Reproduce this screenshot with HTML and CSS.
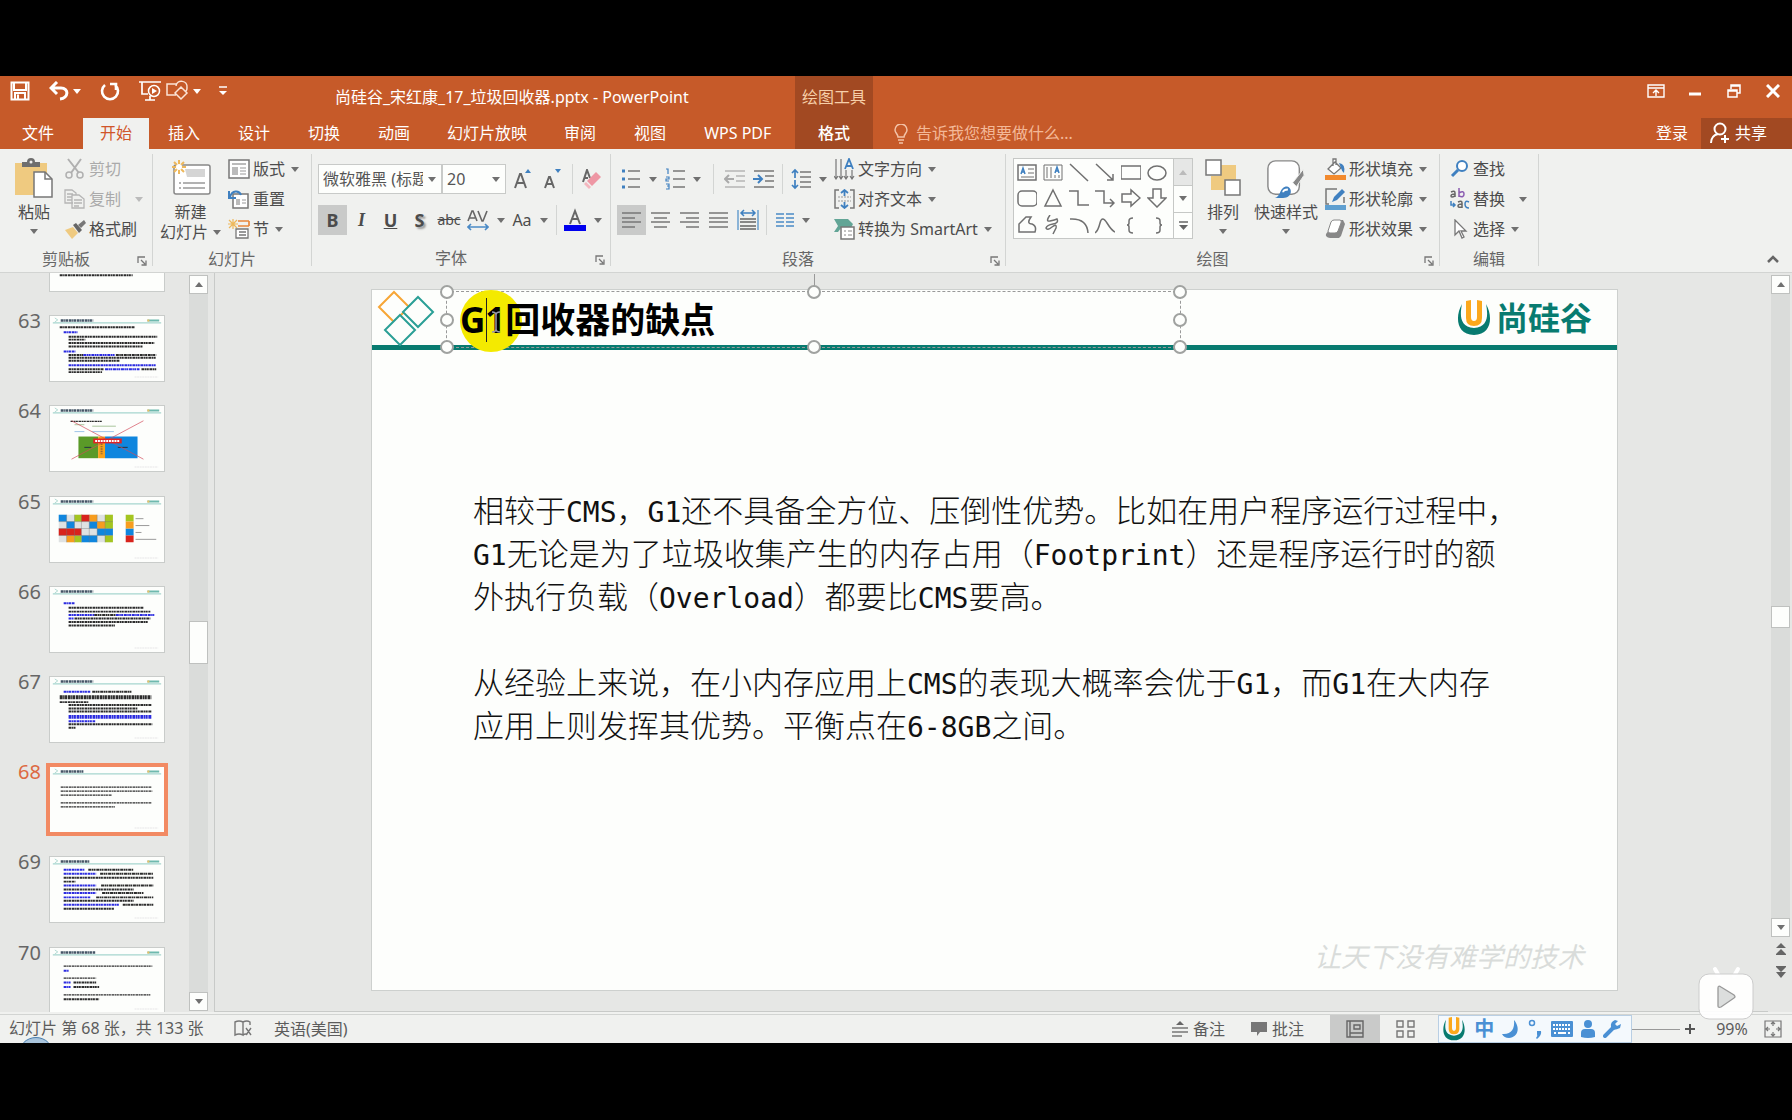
FILE: index.html
```html
<!DOCTYPE html>
<html lang="zh-CN">
<head>
<meta charset="utf-8">
<title>尚硅谷_宋红康_17_垃圾回收器.pptx - PowerPoint</title>
<link rel="stylesheet" href="styles.css">
</head>
<body>
<svg class="defs" aria-hidden="true">
  <symbol id="brand" viewBox="0 0 34 36">
    <path d="M5 4C-2 16-1 35 17 35S36 16 29 4C31 14 32 27 17 28C2 27 3 14 5 4z" fill="#087b70"/>
    <path d="M9 1l5-1v17q0 4 3 4t3-4V0l5 1v17q0 8-8 8t-8-8z" fill="#fba81c"/>
  </symbol>
  <symbol id="launch" viewBox="0 0 10 10"><path d="M1 7V1h7M4 4l4 4M9 4.500V9H4.500" fill="none" stroke="#777" stroke-width="1.300"/></symbol>
  <symbol id="thumb-head" viewBox="0 0 114 66">
    <path d="M2 7H112" stroke="#8fcac2" stroke-width="1"/>
    <path d="M4 2l3 2-3 2" fill="none" stroke="#9fd0c8" stroke-width=".8"/>
    <path d="M98 4.500h12" stroke="#6fb9ae" stroke-width="2"/><path d="M98 4.500h2" stroke="#f0c060" stroke-width="2"/>
    <path d="M85 62h24" stroke="#eee" stroke-width="1.500" stroke-dasharray="2 .6"/>
  </symbol>
</svg>

<div class="app">
  <header class="chrome">
    <div class="titlebar">
      <div class="quick">
        <button aria-label="保存"><svg width="20" height="20" viewBox="0 0 20 20"><path d="M1.500 1.500h17v17h-17zM4 2v7h12V2M5 18v-6h10v6M8 13.500v4" fill="none" stroke="#fff" stroke-width="2"/></svg></button>
        <button class="has-caret" aria-label="撤消"><svg width="20" height="20" viewBox="0 0 20 20"><path d="M8 1L2 7l6 6M2 7h10c8 0 8 10-1 11" fill="none" stroke="#fff" stroke-width="3"/></svg><i class="caret light"></i></button>
        <button aria-label="重复"><svg width="20" height="20" viewBox="0 0 20 20"><path d="M5 4A8 8 0 1 0 15 4M16 9V3h-6M16 3" fill="none" stroke="#fff" stroke-width="2.600"/></svg></button>
        <button aria-label="从头开始放映"><svg width="22" height="22" viewBox="0 0 22 22"><path d="M0 2h22M3 2v12h6M6 20h10M11 16v4" fill="none" stroke="#fff" stroke-width="1.700"/><circle cx="15" cy="11" r="5.500" fill="none" stroke="#fff" stroke-width="1.500"/><path d="M13 8l5 3-5 3z" fill="#fff"/></svg></button>
        <button class="has-caret" aria-label="形状"><svg width="23" height="22" viewBox="0 0 23 22"><path d="M10 15H1V4h10M9 13l6-6 6 6-6 6zM10 6c1-7 12-6 11 2q0 2-1 3" fill="none" stroke="#fbe3d6" stroke-width="1.500"/></svg><i class="caret light"></i></button>
        <button class="custom" aria-label="自定义快速访问工具栏"><svg width="8" height="10" viewBox="0 0 8 10"><path d="M0 1h8" stroke="#fff" stroke-width="1.500"/><path d="M0 5h8L4 9z" fill="#fff"/></svg></button>
      </div>
      <span class="doc-title">尚硅谷_宋红康_17_垃圾回收器.pptx - PowerPoint</span>
    </div>
    <div class="tool-title">绘图工具</div>
    <div class="window-controls">
      <button aria-label="功能区显示选项"><svg width="18" height="14" viewBox="0 0 18 14"><path d="M1 1h16v12H1zM1 4h16M9 12V6M6 9l3-3 3 3" fill="none" stroke="#fff" stroke-width="1.400"/></svg></button>
      <button aria-label="最小化"><svg width="14" height="14" viewBox="0 0 14 14"><path d="M1 10h12" stroke="#fff" stroke-width="3"/></svg></button>
      <button aria-label="还原"><svg width="14" height="14" viewBox="0 0 14 14"><path d="M1 6h9v7H1zM4 5V1h9v8h-3M4 2h9M1 7h9" fill="none" stroke="#fff" stroke-width="1.500"/></svg></button>
      <button aria-label="关闭"><svg width="14" height="14" viewBox="0 0 14 14"><path d="M1 1l12 12M13 1L1 13" stroke="#fff" stroke-width="3"/></svg></button>
    </div>
    <nav class="tabs">
      <button class="file">文件</button><button class="active">开始</button><button>插入</button><button>设计</button><button>切换</button><button>动画</button><button class="show">幻灯片放映</button><button>审阅</button><button>视图</button><button>WPS PDF</button>
    </nav>
    <button class="tool-tab">格式</button>
    <div class="account">
      <label class="tell"><svg width="14" height="20" viewBox="0 0 14 20"><path d="M4 13C4 10 1 9 1 6a6 6 0 0 1 12 0c0 3-3 4-3 7zM4 16h6M5 19h4" fill="none" stroke="#f3c3a8" stroke-width="1.500"/></svg><input type="text" placeholder="告诉我您想要做什么..." aria-label="告诉我您想要做什么"></label>
      <button class="login">登录</button>
      <button class="share"><svg width="20" height="22" viewBox="0 0 20 22"><circle cx="10" cy="7" r="5.500" fill="none" stroke="#fff" stroke-width="2"/><path d="M1 21c0-5 3-8 7-9M15 13v8M11 17h8" fill="none" stroke="#fff" stroke-width="2"/></svg>共享</button>
    </div>
  </header>

  <div class="ribbon">
    <section class="group clip">
      <div class="group-body">
        <button class="big paste"><svg width="38" height="40" viewBox="0 0 38 40"><path d="M0 5h32v32H0z" fill="#efca80"/><path d="M7 9V4h5q0-4 4-4t4 4h5v5z" fill="#6e6e6e"/><circle cx="16" cy="4" r="1.500" fill="#eee"/><path d="M19 14h11l7 7v18H19z" fill="#fff" stroke="#777" stroke-width="1.500"/><path d="M30 14v7h7" fill="none" stroke="#777" stroke-width="1.500"/></svg><span>粘贴</span><i class="caret"></i></button>
        <div class="list">
          <button class="off"><svg width="22" height="22" viewBox="0 0 22 22"><path d="M4 1l11 14M17 1L7 15" stroke="#b0b0b0" stroke-width="2"/><circle cx="5" cy="17" r="3" fill="none" stroke="#b0b0b0" stroke-width="1.500"/><circle cx="16" cy="17" r="3" fill="none" stroke="#b0b0b0" stroke-width="1.500"/></svg>剪切</button>
          <button class="off"><svg width="22" height="20" viewBox="0 0 22 20"><path d="M9 14H1V1h7l4 3v2M3 5h6M3 8h5M3 11h5M8 6h7l5 4v9H8zM10 11h8M10 14h8M10 17h5" fill="none" stroke="#b5b5b5" stroke-width="1.300"/></svg>复制<i class="caret far"></i></button>
          <button><svg width="22" height="20" viewBox="0 0 22 20"><path d="M1 11l8-3 5 6-6 6z" fill="#efca80"/><path d="M9 6l3-2 6 7-3 3z" fill="#666"/><path d="M14 6l6-5 2 3-5 5z" fill="#777"/></svg>格式刷</button>
        </div>
      </div>
      <footer><span>剪贴板</span><button aria-label="剪贴板设置"><svg width="10" height="10"><use href="#launch"/></svg></button></footer>
    </section>

    <section class="group slides">
      <div class="group-body">
        <button class="big"><svg width="40" height="40" viewBox="0 0 40 40"><rect x="3" y="7" width="36" height="29" rx="2" fill="#fff" stroke="#888" stroke-width="1.500"/><path d="M14 11h20v8H16z" fill="#d5d5d5"/><path d="M8 25h2M12 25h22M8 30h2M12 30h22" stroke="#999" stroke-width="1.300"/><path d="M8 2v14M1 9h14M3 4l10 10M13 4L3 14" stroke="#edb85c" stroke-width="2"/><circle cx="8" cy="9" r="3" fill="#fff"/></svg><span>新建</span><span>幻灯片<i class="caret"></i></span></button>
        <div class="list">
          <button><svg width="22" height="20" viewBox="0 0 22 20"><path d="M1 1h20v18H1z" fill="#fff" stroke="#777" stroke-width="1.500"/><path d="M4 4h14v2H4zM4 8h6v8H4z" fill="#bbb"/><path d="M12 9h6M12 12h6M12 15h6" stroke="#999"/></svg>版式<i class="caret"></i></button>
          <button><svg width="22" height="20" viewBox="0 0 22 20"><path d="M5 5h15v14H5z" fill="#fff" stroke="#777" stroke-width="1.500"/><path d="M8 10h4v6H8z" fill="#bbb"/><path d="M14 11h4M14 14h4" stroke="#999"/><path d="M1 2v7h7M2 8c2-7 9-7 11-2" fill="none" stroke="#3f80c0" stroke-width="2"/></svg>重置</button>
          <button><svg width="22" height="22" viewBox="0 0 22 22"><path d="M5 1v10M0 6h10M1 2l8 8M9 2L1 10" stroke="#edb85c" stroke-width="1.200"/><path d="M10 3h11M10 8h11M21 3v5" stroke="#e8873c" stroke-width="1.700"/><path d="M8 11h12v9H8zM11 14h7M11 17h7" fill="#fff" stroke="#777" stroke-width="1.300"/></svg>节<i class="caret"></i></button>
        </div>
      </div>
      <footer><span>幻灯片</span></footer>
    </section>

    <section class="group font">
      <div class="group-body stack">
        <div class="tools">
          <span class="combo family"><select aria-label="字体"><option>微软雅黑 (标题)</option></select><i class="caret"></i></span>
          <span class="combo size"><select aria-label="字号"><option>20</option></select><i class="caret"></i></span>
          <button class="t30" aria-label="增大字号"><svg width="18" height="22" viewBox="0 0 18 22"><path d="M1 20L6 6h1l5 14M3 15h7" fill="none" stroke="#666" stroke-width="2"/><path d="M11 5l3-4 3 4z" fill="#3f80c0"/></svg></button>
          <button class="t30" aria-label="减小字号"><svg width="18" height="22" viewBox="0 0 18 22"><path d="M1 20L5 9h1l4 11M3 16h5" fill="none" stroke="#666" stroke-width="2"/><path d="M11 1h6l-3 4z" fill="#3f80c0"/></svg></button>
          <i class="rule"></i>
          <button class="t30" aria-label="清除格式"><svg width="20" height="20" viewBox="0 0 20 20"><path d="M1 13L5 1l3 8M2 9h4" fill="none" stroke="#666" stroke-width="2"/><path d="M14 3l5 5-9 9-5-5z" fill="#ee97a4"/><path d="M4 13l5 5-2 2-5-5z" fill="#f4b6be"/></svg></button>
        </div>
        <div class="tools">
          <button class="t29 on"><b>B</b></button><button class="t29"><em>I</em></button><button class="t29"><u>U</u></button><button class="t29"><b class="shadow">S</b></button><button class="t30 small"><s>abc</s></button>
          <button class="t44" aria-label="字符间距"><svg width="22" height="22" viewBox="0 0 22 22"><path d="M1 2l4 10h1l4-10M11 12l4-10h1l4 10M13 9h6" transform="translate(21 0) scale(-1 1)" fill="none" stroke="#666" stroke-width="1.600"/><path d="M1 18h20M4 15l-3 3 3 3M18 15l3 3-3 3" fill="none" stroke="#4a8ac6" stroke-width="1.600"/></svg><i class="caret"></i></button>
          <button class="t44">Aa<i class="caret"></i></button><i class="rule"></i>
          <button class="t44" aria-label="字体颜色"><svg width="22" height="24" viewBox="0 0 22 24"><path d="M6 16l5-13 5 13M8 11h6" fill="none" stroke="#666" stroke-width="2"/><path d="M0 17h22v6H0z" fill="#00e"/></svg><i class="caret"></i></button>
        </div>
      </div>
      <footer><span>字体</span><button aria-label="字体设置"><svg width="10" height="10"><use href="#launch"/></svg></button></footer>
    </section>

    <section class="group para">
      <div class="group-body">
        <div class="stack">
          <div class="tools">
            <button class="t44" aria-label="项目符号"><svg width="20" height="22" viewBox="0 0 20 22"><path d="M7 3h12M7 11h12M7 19h12" stroke="#777" stroke-width="1.500"/><path d="M1 3h3M1 11h3M1 19h3" stroke="#3f80c0" stroke-width="3"/></svg><i class="caret"></i></button>
            <button class="t44" aria-label="编号"><svg width="20" height="22" viewBox="0 0 20 22"><path d="M8 3h12M8 11h12M8 19h12" stroke="#777" stroke-width="1.500"/><path d="M1 1h2v5M1 9h3v2H1v2h3M1 16h3v5H1M2 18h2" fill="none" stroke="#3f80c0" stroke-width="1.200"/></svg><i class="caret"></i></button>
            <i class="rule wide"></i>
            <button class="t29" aria-label="减少缩进"><svg width="22" height="20" viewBox="0 0 22 20"><path d="M1 2h20M12 7h9M12 12h9M1 18h20" stroke="#b5b5b5" stroke-width="1.500"/><path d="M10 10H1M5 6l-4 4 4 4" fill="none" stroke="#aaa" stroke-width="2"/></svg></button>
            <button class="t29" aria-label="增加缩进"><svg width="22" height="20" viewBox="0 0 22 20"><path d="M1 2h20M12 7h9M12 12h9M1 18h20" stroke="#777" stroke-width="1.500"/><path d="M0 10h9M5 6l4 4-4 4" fill="none" stroke="#3f80c0" stroke-width="2"/></svg></button>
            <i class="rule"></i>
            <button class="t44" aria-label="行距"><svg width="20" height="22" viewBox="0 0 20 22"><path d="M9 4h11M9 9h11M9 14h11M9 19h11" stroke="#777" stroke-width="1.500"/><path d="M4 10V2M1 5l3-3 3 3M4 12v8M1 17l3 3 3-3" fill="none" stroke="#3f80c0" stroke-width="1.700"/></svg><i class="caret"></i></button>
          </div>
          <div class="tools">
            <button class="t29 on" aria-label="左对齐"><svg width="19" height="16" viewBox="0 0 19 16"><path d="M0 1h19M0 6h13M0 10h19M0 15h13" stroke="#777" stroke-width="1.500"/></svg></button>
            <button class="t29" aria-label="居中"><svg width="19" height="16" viewBox="0 0 19 16"><path d="M0 1h19M3 6h13M0 10h19M3 15h13" stroke="#777" stroke-width="1.500"/></svg></button>
            <button class="t29" aria-label="右对齐"><svg width="19" height="16" viewBox="0 0 19 16"><path d="M0 1h19M6 6h13M0 10h19M6 15h13" stroke="#777" stroke-width="1.500"/></svg></button>
            <button class="t29" aria-label="两端对齐"><svg width="19" height="16" viewBox="0 0 19 16"><path d="M0 1h19M0 6h19M0 10h19M0 15h19" stroke="#777" stroke-width="1.500"/></svg></button>
            <button class="t29" aria-label="分散对齐"><svg width="22" height="22" viewBox="0 0 22 22"><path d="M1 1v20M21 1v20" stroke="#6aa0d0" stroke-width="1.500"/><path d="M4 4h14M7 1L4 4l3 3M15 1l3 3-3 3" fill="none" stroke="#3f80c0" stroke-width="1.500"/><path d="M3 10h16M3 13h16M3 17h16M3 20h16" stroke="#666" stroke-width="1.500"/></svg></button>
            <i class="rule"></i>
            <button class="t44" aria-label="分栏"><svg width="18" height="16" viewBox="0 0 18 16"><path d="M0 2h8M10 2h8M0 6h8M10 6h8M0 10h8M10 10h8M0 14h8M10 14h8" stroke="#4a8ac6" stroke-width="1.700"/></svg><i class="caret"></i></button>
          </div>
        </div>
        <div class="list">
          <button><svg width="21" height="22" viewBox="0 0 21 22"><path d="M2 1v19M7 1v19M12 12v8M18 12v8M0 18l2 3 2-3M5 18l2 3 2-3M10 18l2 3 2-3M16 18l2 3 2-3" fill="none" stroke="#777" stroke-width="1.200"/><path d="M11 11l4-10 4 10M12 8h6" fill="none" stroke="#3f80c0" stroke-width="1.800"/></svg>文字方向<i class="caret"></i></button>
          <button><svg width="21" height="20" viewBox="0 0 21 20"><path d="M5 1H1v18h4M16 1h4v18h-4" fill="none" stroke="#777" stroke-width="1.500"/><path d="M4 8h13M4 12h13" stroke="#999" stroke-dasharray="2 1"/><path d="M10.500 7V1M7 4l3.500-3L14 4M10.500 13v6M7 16l3.500 3 3.500-3" fill="none" stroke="#3f80c0" stroke-width="1.800"/></svg>对齐文本<i class="caret"></i></button>
          <button><svg width="21" height="22" viewBox="0 0 21 22"><path d="M0 1h14l5 5-2 4H7L4 14H0l4-6z" fill="#62a596"/><path d="M7 9h13v12H7z" fill="#fff" stroke="#777" stroke-width="1.500"/><path d="M10 13h2M14 13h4M10 17h2M14 17h4" stroke="#888"/></svg>转换为 SmartArt<i class="caret"></i></button>
        </div>
      </div>
      <footer><span>段落</span><button aria-label="段落设置"><svg width="10" height="10"><use href="#launch"/></svg></button></footer>
    </section>

    <section class="group draw">
      <div class="group-body">
        <div class="gallery">
          <div class="shapes">
            <button aria-label="文本框"><svg viewBox="0 0 20 20"><path d="M1 3h18v15H1z"/><path d="M4 12l2-6 2 6M5 10h3" stroke="#3f80c0"/><path d="M11 7h6M11 11h6M4 15h13" stroke-width="1"/></svg></button>
            <button aria-label="竖排文本框"><svg viewBox="0 0 20 20"><path d="M1 3h18v15H1zM4 5v11M8 5v11M12 13v3M16 13v3" stroke-width="1"/><path d="M12 11l2-6 2 6M12 9h4" stroke="#3f80c0"/></svg></button>
            <button aria-label="直线"><svg viewBox="0 0 20 20"><path d="M1 2l18 17"/></svg></button>
            <button aria-label="箭头"><svg viewBox="0 0 20 20"><path d="M1 2l17 16M18 12v6h-6"/></svg></button>
            <button aria-label="矩形"><svg viewBox="0 0 20 20"><path d="M0 4h20v13H0z"/></svg></button>
            <button aria-label="椭圆"><svg viewBox="0 0 20 20"><ellipse cx="10" cy="11" rx="9" ry="7"/></svg></button>
            <button aria-label="圆角矩形"><svg viewBox="0 0 20 20"><rect x="1" y="3" width="19" height="15" rx="4"/></svg></button>
            <button aria-label="三角形"><svg viewBox="0 0 20 20"><path d="M10 2l8 16H2z"/></svg></button>
            <button aria-label="肘形连接符"><svg viewBox="0 0 20 20"><path d="M0 3h9v14h11"/></svg></button>
            <button aria-label="肘形箭头"><svg viewBox="0 0 20 20"><path d="M0 3h9v12h10M15 11l4 4-4 4"/></svg></button>
            <button aria-label="右箭头"><svg viewBox="0 0 20 20"><path d="M1 6h9V2l9 8-9 8v-4H1z"/></svg></button>
            <button aria-label="下箭头"><svg viewBox="0 0 20 20"><path d="M6 1v9H1l9 9 9-9h-5V1z"/></svg></button>
            <button aria-label="任意多边形"><svg viewBox="0 0 20 20"><path d="M2 17V9l7-7h5q-5 7 1 7 5 2 3 8z"/></svg></button>
            <button aria-label="曲线"><svg viewBox="0 0 20 20"><path d="M7 0q-5 7 0 6t7-2q2 4-4 5t-7 4q1 3 6-1t4 1q-3 6-3 6"/></svg></button>
            <button aria-label="弧形"><svg viewBox="0 0 20 20"><path d="M1 4q17-1 18 14"/></svg></button>
            <button aria-label="自由曲线"><svg viewBox="0 0 20 20"><path d="M0 18Q3 16 5 8t7 0 8 9"/></svg></button>
            <button aria-label="左大括号"><svg viewBox="0 0 20 20"><path d="M12 3q-4 0-4 3v2q0 2-2 2 2 0 2 2v3q0 3 4 3"/></svg></button>
            <button aria-label="右大括号"><svg viewBox="0 0 20 20"><path d="M9 3q4 0 4 3v2q0 2 2 2-2 0-2 2v3q0 3-4 3"/></svg></button>
          </div>
          <div class="gallery-nav"><button class="dim" aria-label="上一行"><i class="caret up"></i></button><button aria-label="下一行"><i class="caret"></i></button><button aria-label="其他"><svg width="9" height="9" viewBox="0 0 9 9"><path d="M0 1h9" stroke="#666" stroke-width="1.500"/><path d="M0 4h9L4.500 9z" fill="#666"/></svg></button></div>
        </div>
        <button class="big arrange"><svg width="36" height="40" viewBox="0 0 36 40"><path d="M15 7h16v16H15zM6 18h14v14H6z" fill="#efca80"/><path d="M1 2h15v15H1zM20 22h15v15H20z" fill="#fff" stroke="#777" stroke-width="1.500"/></svg><span>排列</span><i class="caret"></i></button>
        <button class="big quickstyle"><svg width="40" height="42" viewBox="0 0 40 42"><rect x="1" y="3" width="33" height="35" rx="8" fill="#fff" stroke="#888" stroke-width="1.500"/><path d="M38 12l-11 14 4 4 8-12z" fill="#888" stroke="#f0f1ef"/><path d="M8 42c7-1 5-12 13-12 6 1 6 12-4 12z" fill="#3f80c0"/><path d="M17 36q0-3 5-3" stroke="#fff" fill="none" stroke-width="2"/></svg><span>快速样式</span><i class="caret"></i></button>
        <div class="list">
          <button><svg width="21" height="22" viewBox="0 0 21 22"><path d="M3 11l7-7 6 6-7 6zM8 8V1h3v6" fill="#fff" stroke="#777" stroke-width="1.300"/><path d="M14 5q7 1 5 10-2-1-3-5z" fill="#3f80c0"/><path d="M0 17h21v5H0z" fill="#f28a2e"/></svg>形状填充<i class="caret"></i></button>
          <button><svg width="21" height="22" viewBox="0 0 21 22"><path d="M12 1H1v15h3M19 9v6" fill="none" stroke="#777" stroke-width="1.500"/><path d="M7 14l2-5 8-8 3 3-8 8z" fill="#3f80c0"/><path d="M0 17h21v5H0z" fill="#5f9fd0"/></svg>形状轮廓<i class="caret"></i></button>
          <button><svg width="21" height="20" viewBox="0 0 21 20"><path d="M4 11L7 2q1-1 3-1h8l2 4-4 12-2 2H5q-5-1-4-4z" fill="#888"/><path d="M3 12l3-9q1-2 3-2h6q2 0 1 3l-3 8q-1 2-3 2H5q-2 0-2-2z" fill="#fff" stroke="#888"/></svg>形状效果<i class="caret"></i></button>
        </div>
      </div>
      <footer><span>绘图</span><button aria-label="绘图设置"><svg width="10" height="10"><use href="#launch"/></svg></button></footer>
    </section>

    <section class="group edit">
      <div class="group-body">
        <div class="list">
          <button><svg width="20" height="18" viewBox="0 0 20 18"><circle cx="12" cy="6" r="5" fill="#fff" stroke="#3f80c0" stroke-width="2"/><path d="M8 10l-6 6" stroke="#3f80c0" stroke-width="3"/></svg>查找</button>
          <button><svg width="20" height="22" viewBox="0 0 20 22"><g fill="none" stroke-width="1.500"><path d="M1 4q4-2 4 1v4M5 6Q1 6 1 8t4 0" stroke="#666"/><path d="M9 0v9M9 5q5-3 5 1t-5 2" stroke="#8a5bb0"/><path d="M8 14q4-2 4 1v5M12 16q-4 0-4 2t4 1" stroke="#666"/><path d="M19 14q-4-2-4 2t4 4M1 13v4h4M3 15l2 2-2 2" stroke="#3f80c0"/></g></svg>替换<i class="caret far"></i></button>
          <button><svg width="20" height="20" viewBox="0 0 20 20"><path d="M5 1v15l4-4 3 7 2-1-3-6h5z" fill="#fff" stroke="#777" stroke-width="1.300"/></svg>选择<i class="caret"></i></button>
        </div>
      </div>
      <footer><span>编辑</span></footer>
    </section>
    <button class="collapse" aria-label="折叠功能区"><svg width="12" height="8" viewBox="0 0 12 8"><path d="M1 7l5-5 5 5" fill="none" stroke="#666" stroke-width="2.500"/></svg></button>
  </div>

  <main class="workspace">
    <aside class="panel">
      <ol class="thumbs">
        <li><span></span><button aria-label="幻灯片 62"><svg viewBox="0 0 114 66"><path class="ln" d="M9 50H83"/></svg></button></li>
        <li><span>63</span><button aria-label="幻灯片 63"><svg viewBox="0 0 114 66"><use href="#thumb-head"/><path class="ln hd" d="M10 4.500H43"/><path class="ln" d="M9 11.500H85M18 21H108M18 24H35M18 27.500H105M18 31H93M18 39.500H33M66 39.500H107M18 42.500H107M18 45.500H70M18 54H54M92 54H107M18 57H52"/><path class="ln bl" d="M13 16.500H27M13 36H25M33 39.500H65M18 50H107M55 54H90"/></svg></button></li>
        <li><span>64</span><button aria-label="幻灯片 64"><svg viewBox="0 0 114 66"><use href="#thumb-head"/><path class="ln hd" d="M10 4.500H43"/><path class="ln thin" d="M20 15.500H52"/><path d="M24 19H34M42 20.500H66" stroke="#a9c49a"/><path d="M24 26H34M42 26H64" stroke="#9cc4e8"/><path d="M28 31h20v22H28z" fill="#5a9a28"/><path d="M48 31h7v22h-7z" fill="#f7a11a"/><path d="M55 31h33v22H55z" fill="#0f86de"/><path d="M34 42h7M68 42h10" stroke="#234" /><path d="M51.500 38v11" stroke="#963" stroke-width="2" stroke-dasharray="1.500 1"/><path d="M21 15L94 54M94 15L21 54" stroke="#d24a5a" stroke-width=".7"/><path d="M43 33h29v5H43z" fill="#e02424"/><path d="M45 35.500h25" stroke="#fff" stroke-width="2" stroke-dasharray="2 .8"/></svg></button></li>
        <li><span>65</span><button aria-label="幻灯片 65"><svg viewBox="0 0 114 66"><use href="#thumb-head"/><path class="ln hd" d="M10 4.500H43"/><path d="M8 18h55v28H8z" fill="#dfe2e2"/><path d="M8 18h8v7H8zM16 25h8v7h-8zM39 25h8v7h-8zM47 32h16v7H47zM31 39h16v7H31zM76 32h8v7h-8z" fill="#0f86de"/><path d="M24 18h8v7h-8zM55 18h8v14h-8zM24 39h7v7h-7zM55 39h8v7h-8zM76 18h8v7h-8z" fill="#a4c520"/><path d="M39 18h8v7h-8zM47 25h8v7h-8zM16 39h8v7h-8zM76 25h8v7h-8z" fill="#f79d1e"/><path d="M31 18h8v7h-8zM8 32h23v7H8zM76 39h8v7h-8z" fill="#d8231c"/><path d="M8 25H63M8 32H63M8 39H63M16 18V46M24 18V46M31 18V46M39 18V46M47 18V46M55 18V46" stroke="#777" stroke-width=".4"/><path d="M86 22H94M86 29H100M86 36H92M86 43H107" stroke="#999"/></svg></button></li>
        <li><span>66</span><button aria-label="幻灯片 66"><svg viewBox="0 0 114 66"><use href="#thumb-head"/><path class="ln hd" d="M10 4.500H43"/><path class="ln" d="M18 21H94M18 25H101M44 28.500H66M24 32H101M18 35.500H99M18 39H65"/><path class="ln bl" d="M13 16.500H24M18 28.500H44M66 28.500H105M18 32H23"/></svg></button></li>
        <li><span>67</span><button aria-label="幻灯片 67"><svg viewBox="0 0 114 66"><use href="#thumb-head"/><path class="ln hd" d="M10 4.500H43"/><path class="ln" d="M42 15H82M9 25.500H38M18 28.500H102M18 32H88M18 35H102M18 48H103M18 51.500H25"/><path class="ln fat" d="M9 20.500H102"/><path class="ln bl" d="M13 15H40M18 45H45"/><path class="ln bl fat" d="M18 40.500H102"/></svg></button></li>
        <li class="current"><span>68</span><button aria-label="幻灯片 68"><svg viewBox="0 0 114 66"><use href="#thumb-head"/><path class="ln hd" d="M10 4.500H33"/><path class="ln thin" d="M10 20.500H102M10 24.500H103M10 28.500H62M10 36.500H102M10 40.500H65"/></svg></button></li>
        <li><span>69</span><button aria-label="幻灯片 69"><svg viewBox="0 0 114 66"><use href="#thumb-head"/><path class="ln hd" d="M10 4.500H39"/><path class="ln" d="M38 13H84M50 17H104M13 21H104M13 25H25M51 29H104M13 33H84M52 36.500H94M46 41H104M13 44.500H84M73 48.500H104M13 52.500H64"/><path class="ln bl" d="M13 13H34M13 17H46M13 29H46M13 36.500H46M13 41H40M13 48.500H69"/></svg></button></li>
        <li><span>70</span><button aria-label="幻灯片 70"><svg viewBox="0 0 114 66"><use href="#thumb-head"/><path class="ln hd" d="M10 4.500H45"/><path class="ln" d="M23 35H46M23 39.500H49M13 52H49"/><path class="ln thin" d="M13 18.500H103M13 30.500H46M13 47.500H101"/><path class="ln bl" d="M13 23H18M13 35H20M13 39.500H20"/></svg></button></li>
      </ol>
      <div class="vbar"><button aria-label="向上滚动"><i class="caret up"></i></button><span class="knob left-knob"></span><button aria-label="向下滚动"><i class="caret"></i></button></div>
    </aside>

    <section class="canvas">
      <article class="slide">
        <header class="slide-head">
          <svg class="diamonds" width="58" height="56" viewBox="0 0 58 56"><path d="M17 2l15 15-15 15L2 17z" fill="none" stroke="#f7a636" stroke-width="2"/><path d="M41 7l15 15-15 15-15-15zM23 25l15 15-15 15L8 40z" fill="#fdfefc" stroke="#2a9f96" stroke-width="2"/></svg>
          <div class="title-box">
            <i class="glow"></i>
            <h1>G1回收器的缺点</h1>
            <svg class="ibeam" width="12" height="22" viewBox="0 0 12 22"><path d="M2 1q4 0 4 3 0-3 4-3M6 4v14M2 21q4 0 4-3 0 3 4 3" fill="none" stroke="#99a" stroke-width="1.500"/></svg>
            <i class="text-caret"></i><i class="stem"></i>
            <i class="h nw"></i><i class="h w"></i><i class="h sw"></i><i class="h n"></i><i class="h s"></i><i class="h ne"></i><i class="h e"></i><i class="h se"></i>
          </div>
          <div class="logo"><svg width="34" height="36"><use href="#brand"/></svg><span>尚硅谷</span></div>
        </header>
        <div class="slide-text">
          <p>相较于<span>CMS</span>，<span>G1</span>还不具备全方位、压倒性优势。比如在用户程序运行过程中，<br><span>G1</span>无论是为了垃圾收集产生的内存占用（<span>Footprint</span>）还是程序运行时的额<br>外执行负载（<span>Overload</span>）都要比<span>CMS</span>要高。</p>
          <p>从经验上来说，在小内存应用上<span>CMS</span>的表现大概率会优于<span>G1</span>，而<span>G1</span>在大内存<br>应用上则发挥其优势。平衡点在<span>6-8GB</span>之间。</p>
        </div>
        <footer class="motto">让天下没有难学的技术</footer>
      </article>
    </section>
    <div class="rail">
      <div class="vbar"><button aria-label="向上滚动"><i class="caret up"></i></button><span class="knob right-knob"></span><button aria-label="向下滚动"><i class="caret"></i></button></div>
      <button aria-label="上一张幻灯片"><svg width="10" height="12" viewBox="0 0 10 12"><path d="M5 0l5 5H0zM5 6l5 5H0zM0 11h10v1H0z" fill="#666"/></svg></button>
      <button aria-label="下一张幻灯片"><svg width="10" height="12" viewBox="0 0 10 12"><path d="M0 0h10v1L5 6 0 1zM0 6h10l-5 6z" fill="#666"/></svg></button>
    </div>
    <div class="tv"><svg width="56" height="54" viewBox="0 0 56 54"><path d="M17 3l4 7M40 3l-4 7" stroke="#fff" stroke-width="4" stroke-linecap="round"/><rect x="1" y="8" width="54" height="45" rx="10" fill="#fff" fill-opacity=".93" stroke="#ccc"/><path d="M20 22q0-3 3-1l13 8q2 2 0 3l-13 9q-3 1-3-1z" fill="#dcdedd" stroke="#999" stroke-width="1.300"/></svg></div>
  </main>

  <footer class="status">
    <span class="count">幻灯片 第 68 张，共 133 张</span>
    <button class="spell" aria-label="拼写检查"><svg width="20" height="18" viewBox="0 0 20 18"><path d="M10 15q-4-2-8 0V2q4-2 8 0zV2q4-2 7 0v3M10 15q3-2 4 0M13 8l5 7M18 8l-5 7" fill="none" stroke="#777" stroke-width="1.400"/></svg></button>
    <button>英语(美国)</button>
    <div class="status-right">
      <button class="note"><svg width="16" height="18" viewBox="0 0 16 18"><path d="M0 8h16M0 12h16M0 16h10" stroke="#777" stroke-width="1.500"/><path d="M4 5l4-4 4 4z" fill="#666"/></svg>备注</button>
      <button class="note"><svg width="16" height="16" viewBox="0 0 16 16"><path d="M0 1h16v10H9l-3 4v-4H0z" fill="#777"/></svg>批注</button>
      <button class="view on" aria-label="普通视图"><svg width="18" height="18" viewBox="0 0 18 18"><path d="M1 1h16v16H1zM4 1v16M4 13h13M8 5h6v4H8z" fill="none" stroke="#666" stroke-width="1.400"/></svg></button>
      <button class="view" aria-label="幻灯片浏览"><svg width="19" height="18" viewBox="0 0 19 18"><path d="M1 1h6v6H1zM12 1h6v6h-6zM1 11h6v6H1zM12 11h6v6h-6z" fill="none" stroke="#777" stroke-width="1.400"/></svg></button>
      <div class="ime">
        <svg width="24" height="24"><use href="#brand"/></svg><b>中</b>
        <svg width="18" height="20" viewBox="0 0 18 20"><path d="M12 1c6 7 5 17-5 18q-5 0-7-4c9 1 13-5 12-14z" fill="#4a90d4"/></svg>
        <svg width="14" height="20" viewBox="0 0 14 20"><circle cx="4" cy="4" r="2.500" fill="none" stroke="#4a90d4" stroke-width="1.500"/><path d="M9 12h4q1 4-4 8l-1-1q2-2 1-4z" fill="#4a90d4"/></svg>
        <svg width="22" height="16" viewBox="0 0 22 16"><rect width="22" height="16" rx="1" fill="#4a90d4"/><path d="M2 4h18M2 8h18" stroke="#fff" stroke-width="2" stroke-dasharray="2 1"/><path d="M3 12h2M7 12h8M17 12h2" stroke="#fff" stroke-width="2"/></svg>
        <svg width="14" height="18" viewBox="0 0 14 18"><circle cx="7" cy="4" r="4" fill="#4a90d4"/><path d="M0 17V13q0-4 4-4h6q4 0 4 4v4q-7 2-14 0z" fill="#4a90d4"/></svg>
        <svg width="18" height="18" viewBox="0 0 18 18"><path d="M2 16L11 7" stroke="#4a90d4" stroke-width="4" stroke-linecap="round"/><path d="M12 0q-5 2-4 7t9 1l1-4-4 2-2-2 3-3z" fill="#4a90d4"/></svg>
      </div>
      <input class="zoom" type="range" min="10" max="400" value="99" aria-label="缩放">
      <button class="plus" aria-label="放大"><svg width="12" height="12" viewBox="0 0 12 12"><path d="M6 1v10M1 6h10" stroke="#555" stroke-width="2"/></svg></button>
      <button class="percent">99%</button>
      <button aria-label="使幻灯片适应当前窗口"><svg width="18" height="18" viewBox="0 0 18 18"><path d="M1 1h16v16H1zM9 3v3M9 12v3M3 9h3M12 9h3M7 4l2-2 2 2M7 14l2 2 2-2M4 7L2 9l2 2M14 7l2 2-2 2" fill="none" stroke="#777" stroke-width="1.200"/></svg></button>
    </div>
    <i class="orb"></i>
  </footer>
</div>
</body>
</html>
```
FILE: styles.css
```css
* { box-sizing: border-box; }

body {
  margin: 0;
  padding: 76px 0 77px;
  height: 100vh;
  background: #000;
  color: #4c4c4c;
  font: 16px/20px "Noto Sans", "Noto Sans CJK SC", sans-serif;
}

button, input, select { font: inherit; color: inherit; }

button {
  display: flex;
  align-items: center;
  justify-content: center;
  padding: 0;
  border: 0;
  background: none;
  white-space: nowrap;
}

svg { flex: none; display: block; }
.defs { position: absolute; width: 0; height: 0; }

.app {
  display: flex;
  flex-direction: column;
  height: 100%;
  overflow: hidden;
  background: #f0f1ef;
}

.caret {
  flex: none;
  width: 0;
  height: 0;
  border: 4px solid transparent;
  border-top: 5px solid #707070;
  border-bottom: 0;
}
.caret.up { border-top: 0; border-bottom: 5px solid #707070; }
.caret.light { border-top-color: #fff; }

/* Title bar and tabs */
.chrome {
  flex: none;
  display: grid;
  grid-template-columns: 795px 78px 1fr;
  grid-template-rows: 42px 31px;
  background: #c65a29;
  color: #fff;
}
.titlebar { display: flex; }
.quick { display: flex; align-items: center; height: 30px; width: 335px; padding-left: 10px; gap: 19px; }
.quick button { gap: 4px; }
.quick button:nth-child(5) { margin-left: -14px; }
.quick .custom { margin-left: -1px; }
.doc-title { padding-top: 11px; white-space: nowrap; }
.tool-title { padding-top: 11px; text-align: center; background: #a24922; color: #f6cfa9; white-space: nowrap; }
.window-controls { display: flex; justify-content: flex-end; height: 30px; }
.window-controls button { width: 39px; }
.tabs { display: flex; }
.tabs button { padding: 0 19px 2px; }
.tabs .file { width: 83px; padding-right: 26px; }
.tabs .active { background: #f0f1ef; color: #d0552a; padding: 0 17px 2px; }
.tabs .show { padding: 0 18px 2px; }
.tool-tab { background: #a24922; font-weight: 500; padding-bottom: 2px; }
.account { display: flex; justify-content: flex-end; }
.tell { display: flex; align-items: center; gap: 8px; margin-right: auto; padding-left: 21px; }
.tell input { width: 220px; padding: 0 0 2px; border: 0; background: none; }
.tell input::placeholder { color: #f3b898; opacity: 1; }
.login { margin-right: 13px; padding-bottom: 2px; }
.share { width: 91px; gap: 5px; background: #a24922; justify-content: flex-start; padding: 0 0 2px 9px; }

/* Ribbon */
.ribbon { flex: none; display: flex; height: 124px; padding: 5px 0 6px; border-bottom: 1px solid #d2d4d2; }
.group { flex: none; display: flex; flex-direction: column; border-right: 1px solid #d3d5d3; }
.group-body { display: flex; height: 90px; }
.group > footer { display: flex; align-items: center; height: 16px; margin-top: 7px; color: #666; }
.group > footer span { flex: 1; text-align: center; }
.group > footer button { width: 20px; height: 20px; padding-top: 4px; }
.clip { width: 153px; }
.slides { width: 159px; }
.font { width: 299px; }
.para { width: 395px; }
.draw { width: 434px; }
.edit { width: 99px; }

.list { display: flex; flex-direction: column; }
.list button { height: 30px; gap: 3px; justify-content: flex-start; }
.list .caret { margin-left: 3px; }
.list .caret.far { margin-left: 11px; }
.off { color: #aaa; }
.off .caret { border-top-color: #bbb; }

.big { flex-direction: column; justify-content: flex-start; padding-top: 4px; }
.big svg { margin-bottom: 4px; height: 40px; }
.big span { display: flex; align-items: center; gap: 5px; }
.big > .caret { margin-top: 7px; }
.paste { width: 64px; padding-left: 4px; }
.slides .big { width: 75px; }
.arrange { width: 54px; padding-left: 6px; }
.quickstyle { width: 78px; }

.stack { display: flex; flex-direction: column; gap: 11px; padding: 10px 0 0 6px; }
.tools { display: flex; height: 30px; align-items: center; }
.tools button { flex: none; height: 30px; gap: 8px; }
.t29 { width: 29px; }
.t30 { width: 30px; }
.t44 { width: 44px; }
.tools .on, .status .on { background: #c9cac9; }
.tools b, .tools em, .tools u { font-size: 18px; font-weight: 700; }
.tools em { font-family: "Liberation Serif", serif; }
.tools .shadow { text-shadow: 2px 2px 2px #999; }
.tools .small { font-size: 14px; }
.rule { flex: none; width: 1px; height: 30px; background: #d3d5d3; margin: 0 4px; }
.rule.wide { margin: 0 6px 0 8px; }
.combo { flex: none; position: relative; height: 30px; }
.combo select { appearance: none; width: 100%; height: 100%; padding: 0 18px 0 4px; border: 1px solid #c8cac8; border-radius: 0; background: #fdfefc; color: #555; }
.combo .caret { position: absolute; right: 6px; top: 13px; }
.family { width: 124px; }
.size { width: 64px; margin-right: 2px; }
.para .stack { width: 223px; }

.gallery { flex: none; display: flex; margin: 4px 0 5px 7px; border: 1px solid #c6c8c6; background: #fdfefc; width: 180px; }
.shapes { display: grid; grid-template-columns: repeat(6, 26px); padding: 0 2px 0 0; flex: 1; }
.shapes svg { width: 20px; height: 20px; fill: none; stroke: #707070; stroke-width: 1.5px; }
.gallery-nav { display: grid; grid-template-rows: 1fr 1fr 1fr; width: 19px; border-left: 1px solid #c6c8c6; }
.gallery-nav button + button { border-top: 1px solid #c6c8c6; }
.gallery-nav .dim { background: #e6e7e6; }
.dim .caret { border-bottom-color: #bbb; }
.edit .list { padding-left: 10px; }
.collapse { margin-left: auto; width: 38px; align-self: flex-end; height: 14px; }

/* Workspace */
.workspace { position: relative; flex: 1; min-height: 0; display: flex; background: #e6e7e5; }
.panel { flex: none; display: flex; width: 215px; padding-bottom: 1px; border-right: 1px solid #c8cac8; overflow: hidden; }
.thumbs { flex: 1; display: grid; grid-auto-rows: 1fr; height: 110%; margin: -48px 0 0; padding: 0 0 0 18px; list-style: none; }
.thumbs li { display: flex; gap: 8px; min-height: 0; }
.thumbs span { width: 23px; font-size: 20px; line-height: 12px; color: #666; }
.thumbs button { width: 116px; height: 67px; border: 1px solid #c9ccca; background: #fdfefc; }
.thumbs svg { width: 114px; height: 65px; }
.thumbs .current span { color: #dd6a43; }
.thumbs .current button { outline: 3px solid #f28a63; border-color: #f28a63; }
.ln { fill: none; stroke: #2c2c2c; stroke-width: 2; stroke-dasharray: 3 .5 1.5 .4 2 .7; }
.ln.hd { stroke: #456; stroke-width: 2.6; }
.ln.bl { stroke: #2b2be0; }
.ln.thin { stroke-width: 1.3; }
.ln.fat { stroke-width: 4; }

.vbar { flex: none; display: flex; flex-direction: column; justify-content: space-between; width: 19px; background: #dadcda; position: relative; }
.vbar button, .knob { width: 19px; height: 19px; border: 1px solid #bfc1bf; background: #fdfefc; }
.panel .vbar { margin: 2px 6px 0 0; }
.knob { position: absolute; left: 0; }
.left-knob { top: 47%; height: 43px; }
.right-knob { top: 50%; height: 22px; }

.canvas { flex: 1; padding: 16px 150px 20px 156px; border-bottom: 1px solid #c8cac8; display: flex; }
.slide { flex: 1; display: flex; flex-direction: column; background: #fdfefc; border: 1px solid #cdd0ce; }
.slide-head { display: flex; height: 60px; border-bottom: 5px solid #087b70; }
.diamonds { margin-left: 5px; }
.title-box { position: relative; flex: 1; height: 57px; margin: 1px 0 0 11px; max-width: 735px; border: 1px dashed #999; }
h1 { position: relative; margin: 0; padding-left: 13px; font-size: 35px; line-height: 56px; font-weight: 700; color: #000; white-space: nowrap; }
.glow { position: absolute; left: 13px; top: -2px; width: 62px; height: 62px; border-radius: 50%; background: #f4ea00; }
.ibeam { position: absolute; left: 43px; top: 19px; }
.text-caret { position: absolute; left: 39px; top: 6px; width: 1px; height: 44px; background: #222; }
.stem { position: absolute; left: 50%; top: -18px; width: 1px; height: 13px; background: #999; }
.h { position: absolute; width: 14px; height: 14px; margin: -7px; border: 2px solid #a0a2a0; border-radius: 50%; background: #fdfefc; }
.nw, .w, .sw { left: 0; }
.n, .s { left: 50%; }
.ne, .e, .se { left: 100%; }
.nw, .n, .ne { top: 0; }
.w, .e { top: 50%; }
.sw, .s, .se { top: 100%; }
.logo { display: flex; align-items: center; gap: 5px; margin: 0 25px 0 auto; color: #087b70; font-size: 32px; font-weight: 700; white-space: nowrap; }
.slide-text { padding: 137px 90px 0 101px; color: #111; font: 300 31px/43px "Noto Sans CJK SC", sans-serif; white-space: nowrap; }
.slide-text p { margin: 0 0 43px; }
.slide-text span { font: 400 28px/28px "DejaVu Sans Mono", monospace; }
.motto { margin: auto 33px 16px auto; font-size: 27px; line-height: 34px; font-style: italic; color: #d9dcda; }

.rail { flex: none; width: 24px; padding: 2px 2px 34px 3px; display: flex; flex-direction: column; align-items: center; }
.rail .vbar { flex: 1; margin-bottom: -5px; }
.rail > button { height: 12px; width: 19px; margin-top: 11px; }
.tv { position: absolute; right: 38px; bottom: -8px; z-index: 1; }

/* Status bar */
.status { flex: none; position: relative; display: flex; align-items: stretch; height: 29px; margin-top: 2px; border-top: 1px solid #d2d4d2; color: #5c5c5c; overflow: hidden; white-space: nowrap; }
.count { width: 224px; padding: 3px 0 0 9px; }
.spell { width: 50px; padding-right: 12px; }
.status-right { display: flex; margin-left: auto; padding-right: 10px; }
.note { width: 79px; gap: 5px; justify-content: flex-start; }
.view { width: 50px; }
.ime { display: flex; align-items: center; justify-content: space-between; width: 194px; margin-left: 8px; padding: 0 10px 0 3px; border: 1px solid #b9cfe4; background: #f4f9fd; color: #4a90d4; }
.ime b { font-size: 20px; }
.zoom { appearance: none; width: 48px; height: 1px; margin: auto 0; background: #999; }
.zoom::-webkit-slider-thumb { appearance: none; width: 1px; height: 1px; }
.plus { width: 20px; }
.percent { width: 64px; }
.orb { position: absolute; left: 18px; top: 22px; width: 36px; height: 36px; border: 1px solid #4a7fb0; border-radius: 50%; background: #a9c4dc; }
```
